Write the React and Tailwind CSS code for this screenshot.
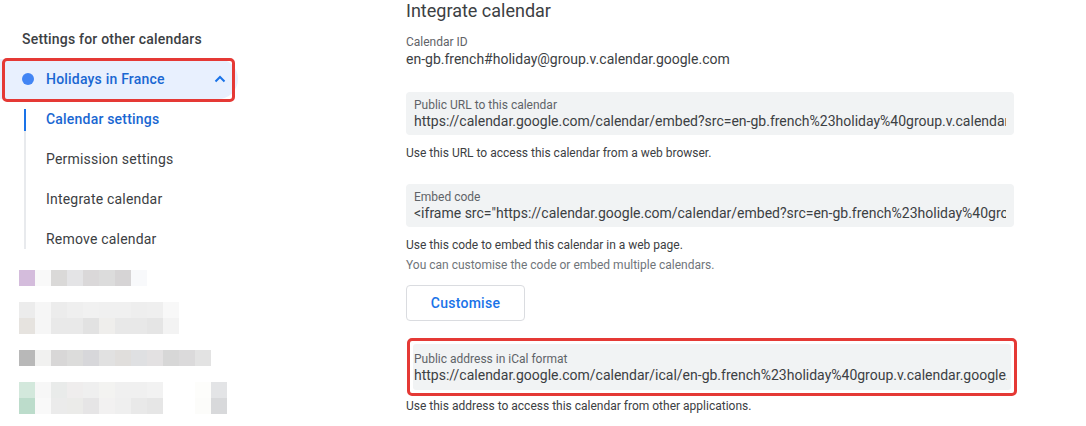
import React from 'react';

const blurRows = [
  ['#d4bcdc', '#f9f9f9', '#dad9d8', '#e4e4e6', '#dad8d9', '#dcdcdc', '#d6d4d5', '#f8f9fb'],
  null,
  ['#ececec', '#f6f6f6', '#ececec', '#efefef', '#f1f1f1', '#f0f0f0', '#f0f0f0', '#eeeeee', '#efefef', '#f8f8f8'],
  ['#e6e3df', '#f6f6f6', '#e9e9e9', '#e9e9e9', '#e2e2e2', '#efeeec', '#e8e8e8', '#e8e8e8', '#e5e5e5', '#f3f3f3'],
  null,
  ['#b8b8b8', '#f1f1f0', '#d8d7d7', '#dcdcdb', '#d7d7da', '#e1e1e1', '#e0dedc', '#dfe0e2', '#e3e1e2', '#d7d7d7', '#dbdadb', '#e3e3e3'],
  null,
  ['#d3e8dc', '#f7f7f7', '#e9ebea', '#efeded', '#efefef', '#f3f3f1', '#f0f0f0', '#f0f0f0', '#f2f2f2', '#ffffff', '#ffffff', '#fdfdfb', '#e3e4e6'],
  ['#bcdccb', '#f9f9f9', '#ebebeb', '#ebebe9', '#e6e5e6', '#f2f1f1', '#efefef', '#e9e9e9', '#e6e6e6', '#ffffff', '#ffffff', '#fcfcfa', '#d8d9db'],
];

const subItems = ['Calendar settings', 'Permission settings', 'Integrate calendar', 'Remove calendar'];

const UrlBox = ({ label, value }) => (
  <div className="bg-[#f1f3f4] rounded-[4px] px-2 pt-[5px] pb-[6px] w-[608px]">
    <div className="text-[12px] leading-4 text-[#5f6368]">{label}</div>
    <div className="text-[14px] leading-4 text-[#3c4043] whitespace-nowrap overflow-hidden">{value}</div>
  </div>
);

const Sidebar = () => (
  <div className="w-[406px] shrink-0">
    <div className="pt-[31px] pl-[22px] text-[14px] leading-4 font-medium text-[#3c4043] tracking-[0.2px]">
      Settings for other calendars
    </div>

    {/* selected calendar */}
    <div className="relative mt-[12px] w-[238px] h-10 bg-[#e8f0fe] rounded-r-full flex items-center">
      <span className="ml-[22px] w-3 h-3 rounded-full bg-[#4285f4]" />
      <span className="ml-3 text-[14px] font-medium text-[#1967d2] tracking-[0.2px]">Holidays in France</span>
      <svg className="ml-auto mr-[12px]" width="12" height="8" viewBox="0 0 12 8" fill="none">
        <path d="M1.5 6.5 L6 2 L10.5 6.5" stroke="#1a73e8" strokeWidth="2" />
      </svg>
      <div className="absolute left-[2px] top-[-1px] w-[233px] h-[44px] border-[3px] border-[#e53935] rounded-[5px]" />
    </div>

    <div className="flex ml-[24px]">
      <div className="w-[2px] my-[10px] bg-[#e8eaed]">
        <div className="h-[22px] bg-[#1a73e8]" />
      </div>
      <div className="flex flex-col">
        {subItems.map((item, i) => (
          <div
            key={item}
            className={`h-10 flex items-center pl-[20px] text-[14px] tracking-[0.2px] ${
              i === 0 ? 'text-[#1967d2] font-medium' : 'text-[#3c4043]'
            }`}
          >
            {item}
          </div>
        ))}
      </div>
    </div>

    {/* other calendars (blurred) */}
    <div className="mt-[11px] pl-[19px] flex flex-col">
      {blurRows.map((row, i) =>
        row ? (
          <div key={i} className="flex h-4">
            {row.map((c, j) => (
              <div key={j} className="w-4 h-4" style={{ backgroundColor: c }} />
            ))}
          </div>
        ) : (
          <div key={i} className="h-4" />
        )
      )}
    </div>
  </div>
);

export default function App() {
  return (
    <div className="w-[1086px] h-[426px] overflow-hidden bg-white flex font-['Roboto',sans-serif]">
      <Sidebar />

      <div className="flex flex-col">
        <h2 className="text-[18px] leading-[22px] text-[#3c4043]">Integrate calendar</h2>

        <div className="mt-[12px] text-[12px] leading-4 text-[#5f6368]">Calendar ID</div>
        <div className="text-[14px] leading-[18px] text-[#3c4043]">en-gb.french#holiday@group.v.calendar.google.com</div>

        <div className="mt-[24px]">
          <UrlBox
            label="Public URL to this calendar"
            value="https://calendar.google.com/calendar/embed?src=en-gb.french%23holiday%40group.v.calendar.google.com&ctz=Europe%2FParis"
          />
        </div>
        <p className="mt-[10px] text-[12px] leading-4 text-[#3c4043]">Use this URL to access this calendar from a web browser.</p>

        <div className="mt-[23px]">
          <UrlBox
            label="Embed code"
            value={'<iframe src="https://calendar.google.com/calendar/embed?src=en-gb.french%23holiday%40group.v.calendar.google.com&ctz=Europe%2FParis" style="border: 0" width="800" height="600" frameborder="0" scrolling="no"></iframe>'}
          />
        </div>
        <p className="mt-[8px] text-[12px] leading-5 text-[#3c4043]">Use this code to embed this calendar in a web page.</p>
        <p className="text-[12px] leading-5 text-[#70757a]">You can customise the code or embed multiple calendars.</p>

        <button className="mt-[10px] w-[119px] h-9 border border-[#dadce0] rounded-[4px] text-[14px] font-medium text-[#1a73e8] tracking-[0.25px]">
          Customise
        </button>

        <div className="mt-[17px] ml-[1px] w-[610px] border-[3px] border-[#e53935] rounded-[5px] p-[3px]">
          <div className="bg-[#f1f3f4] rounded-[3px] pl-[1px] pr-1 pt-[7px] pb-[7px]">
            <div className="text-[12px] leading-4 text-[#5f6368]">Public address in iCal format</div>
            <div className="text-[14px] leading-4 text-[#3c4043] whitespace-nowrap overflow-hidden">
              https://calendar.google.com/calendar/ical/en-gb.french%23holiday%40group.v.calendar.google.com/public/basic.ics
            </div>
          </div>
        </div>
        <p className="mt-[2px] text-[12px] leading-4 text-[#3c4043]">Use this address to access this calendar from other applications.</p>
      </div>
    </div>
  );
}
